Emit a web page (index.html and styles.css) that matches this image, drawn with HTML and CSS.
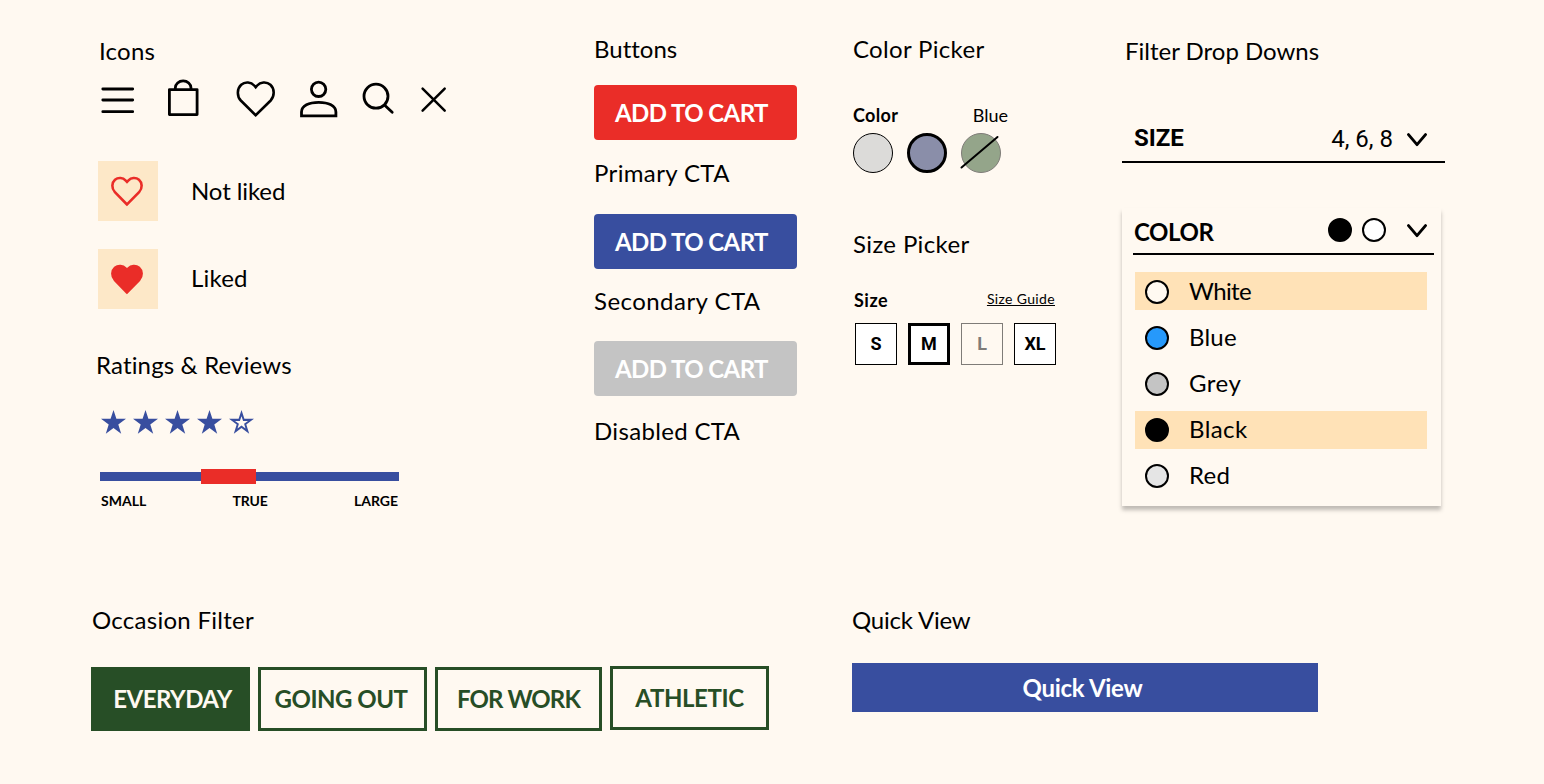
FILE: index.html
```html
<!DOCTYPE html>
<html lang="en">
<head>
<meta charset="utf-8">
<title>UI Components</title>
<link rel="stylesheet" href="styles.css">
</head>
<body>
<main class="board">
  <section class="col col-icons">
    <h2 class="title title-icons"><span class="t t-icons">Icons</span></h2>
    <svg class="icon-row" width="360" height="44" viewBox="0 0 360 44" fill="none" stroke="#000" stroke-width="2.8" stroke-linecap="round">
      <path d="M6.800 13H36.700M6.800 24H36.700M6.800 35.700H36.700"/>
      <path d="M73.4 13.6H101.1V38.6H73.4ZM79.300 13V12A7.7 6.900 0 0 1 95 12V13" stroke-linejoin="round"/>
      <path d="M159.7 39.200L144.8 24.5C140.6 20 141.1 12.5 145.2 8.8C149.2 5.2 155.2 6.2 158.2 9.5L159.7 11.2L161.2 9.5C164.2 6.2 170.4 5.2 174.4 8.8C178.5 12.5 178.9 20 174.7 24.5Z" stroke-width="2.600"/>
      <circle cx="222.6" cy="13.3" r="7.2"/>
      <path d="M205.5 39.800V36C205.5 29.8 213 26.3 222.7 26.3S239.9 29.8 239.9 36V39.800Z" stroke-linecap="butt"/>
      <circle cx="280" cy="20.2" r="12"/>
      <path d="M289 29.5L296.2 36.3"/>
      <path d="M326.6 12.6L348.700 34.6M348.700 12.6L326.6 34.6" stroke-width="2.500"/>
    </svg>
    <div class="like">
      <span class="tile"><svg width="34" height="32" viewBox="0 0 34 32"><path class="heart" d="M17 28.5L4.9 16.1C1.3 12.4 1.7 6.7 5 3.8C8.2 1.1 13 1.7 15.5 4.3L17 5.9L18.500 4.300C21 1.700 25.800 1.100 29 3.800C32.300 6.700 32.700 12.400 29.100 16.100Z"/></svg></span>
      <span class="t t-notliked">Not liked</span>
    </div>
    <div class="like like-on">
      <span class="tile"><svg width="34" height="32" viewBox="0 0 34 32"><path class="heart heart-full" d="M17 28.5L4.9 16.1C1.3 12.4 1.7 6.7 5 3.8C8.2 1.1 13 1.7 15.500 4.300L17 5.900L18.500 4.300C21 1.700 25.800 1.100 29 3.800C32.300 6.700 32.700 12.400 29.100 16.100Z"/></svg></span>
      <span class="t t-liked">Liked</span>
    </div>
    <h2 class="title title-ratings"><span class="t t-ratings">Ratings &amp; Reviews</span></h2>
    <svg class="stars" width="154" height="24" viewBox="0 0 154 24">
      <defs><path id="star" d="M12.5 0L15.400 8.800H25L17.300 14.400L20.200 23.700L12.500 18L4.800 23.700L7.700 14.400L0 8.800H9.600Z"/></defs>
      <use href="#star" x="0"/><use href="#star" x="32"/><use href="#star" x="64"/><use href="#star" x="96"/>
      <path fill-rule="evenodd" d="M140.500 0L143.400 8.800H153L145.300 14.400L148.200 23.700L140.500 18L132.800 23.700L135.700 14.400L128 8.800H137.600ZM140.500 6.200L138.900 10.900H134L137.900 13.700L136.500 18.600L140.500 15.600L144.500 18.600L143.100 13.700L147 10.900H142.100Z"/>
    </svg>
    <div class="fit"><span class="fit-mark"></span></div>
    <div class="fit-labels"><span class="t t-small">SMALL</span><span class="t t-true">TRUE</span><span class="t t-large">LARGE</span></div>
  </section>

  <section class="col col-buttons">
    <h2 class="title"><span class="t t-buttons">Buttons</span></h2>
    <button class="cta cta-primary"><span class="t t-cart">ADD TO CART</span></button>
    <p class="title cap-primary"><span class="t t-primary">Primary CTA</span></p>
    <button class="cta cta-secondary"><span class="t t-cart">ADD TO CART</span></button>
    <p class="title cap-secondary"><span class="t t-secondary">Secondary CTA</span></p>
    <button class="cta cta-disabled"><span class="t t-cart">ADD TO CART</span></button>
    <p class="title cap-disabled"><span class="t t-disabled">Disabled CTA</span></p>
  </section>

  <section class="col col-pickers">
    <h2 class="title"><span class="t t-cpicker">Color Picker</span></h2>
    <div class="color-head"><b class="t t-color">Color</b><span class="t t-cblue">Blue</span></div>
    <div class="swatches">
      <span class="swatch"></span>
      <span class="swatch swatch-selected"></span>
      <span class="swatch swatch-out"><svg width="40" height="40" viewBox="0 0 40 40"><path d="M0.500 34.500L36.500 4" stroke="#000" stroke-width="2" stroke-linecap="round"/></svg></span>
    </div>
    <h2 class="title title-size"><span class="t t-spicker">Size Picker</span></h2>
    <div class="size-head"><b class="t t-size">Size</b><a class="guide t t-guide">Size Guide</a></div>
    <div class="sizes">
      <span class="size">S</span><span class="size size-selected">M</span><span class="size size-out">L</span><span class="size">XL</span>
    </div>
  </section>

  <section class="col col-filters">
    <h2 class="title title-filters"><span class="t">Filter Drop Downs</span></h2>
    <div class="drop">
      <b class="t">SIZE</b>
      <span class="drop-value t">4, 6, 8</span>
      <svg class="chevron" width="20" height="14" viewBox="0 0 20 14"><path d="M1.500 1.600L10 11.600L18.500 1.600"/></svg>
    </div>
    <div class="panel">
      <div class="panel-head">
        <b class="t t-dcolor">COLOR</b>
        <span class="dot dot-black"></span><span class="dot dot-white"></span>
        <svg class="chevron" width="20" height="14" viewBox="0 0 20 14"><path d="M1.500 1.600L10 11.600L18.500 1.600"/></svg>
      </div>
      <ul class="options">
        <li class="option option-on"><span class="dot"></span><span class="t t-white">White</span></li>
        <li class="option"><span class="dot dot-blue"></span><span class="t t-blue">Blue</span></li>
        <li class="option"><span class="dot dot-grey"></span><span class="t t-grey">Grey</span></li>
        <li class="option option-on option-low"><span class="dot dot-black"></span><span class="t t-black">Black</span></li>
        <li class="option"><span class="dot dot-light"></span><span class="t t-red">Red</span></li>
      </ul>
    </div>
  </section>

  <section class="occasion">
    <h2 class="title title-occasion"><span class="t t-occasion">Occasion Filter</span></h2>
    <div class="chips">
      <button class="chip chip-on"><span class="t t-everyday">EVERYDAY</span></button>
      <button class="chip chip-going"><span class="t t-going">GOING OUT</span></button>
      <button class="chip chip-work"><span class="t t-work">FOR WORK</span></button>
      <button class="chip chip-athletic"><span class="t t-athletic">ATHLETIC</span></button>
    </div>
  </section>

  <section class="quick">
    <h2 class="title title-quick"><span class="t t-quick">Quick View</span></h2>
    <button class="quick-button"><span class="t t-quickb">Quick View</span></button>
  </section>
</main>
</body>
</html>
```
FILE: styles.css
```css
* { box-sizing: border-box; }
body { margin: 0; background: #fff9f1; color: #000; font-family: Lato, "Open Sans", sans-serif; font-size: 24px; line-height: 30px; font-variant-ligatures: none; }
h2, p, ul { margin: 0; padding: 0; font-weight: 400; font-size: 24px; list-style: none; }
button { border: 0; padding: 0; font: 700 24px/30px Lato, sans-serif; }
svg { display: block; flex: none; }
.t { white-space: nowrap; }
.title { height: 30px; padding-left: 1px; }

.board {
  display: grid;
  width: 1544px;
  height: 784px;
  grid-template-columns: 503px 258px 270px 331px;
  grid-template-rows: 571px 1fr;
  padding: 34px 0 0 91px;
}
.col { display: flex; flex-direction: column; align-items: flex-start; }

/* Letter spacing per label */
.t-icons { letter-spacing: .25px; }
.t-notliked { letter-spacing: -.1px; }
.t-liked { letter-spacing: .2px; }
.t-ratings { letter-spacing: .15px; }
.t-true { letter-spacing: -.2px; }
.t-cart { letter-spacing: -.58px; }
.t-primary { letter-spacing: .36px; }
.t-secondary { letter-spacing: .45px; }
.t-disabled { letter-spacing: .33px; }
.t-cpicker { letter-spacing: .33px; }
.t-spicker { letter-spacing: .36px; }
.t-color { letter-spacing: .35px; }
.t-size { letter-spacing: .5px; }
.t-guide { letter-spacing: .35px; }
.t-dcolor { letter-spacing: -.4px; }
.t-white { letter-spacing: -.6px; }
.t-blue { letter-spacing: .2px; }
.t-grey { letter-spacing: .5px; }
.t-black { letter-spacing: .4px; }
.t-red { letter-spacing: .3px; }
.t-occasion { letter-spacing: .27px; }
.t-everyday { letter-spacing: -.5px; }
.t-going { letter-spacing: -.5px; }
.t-work { letter-spacing: -.9px; }
.t-athletic { letter-spacing: -.4px; }
.t-quick { letter-spacing: -.2px; }
.t-quickb { letter-spacing: -.3px; }

/* Icons, likes and ratings */
.title-icons { margin-top: 2px; padding-left: 8px; }
.icon-row { margin: 10px 0 0 5px; }
.like { display: flex; align-items: center; gap: 33px; margin: 41px 0 0 7px; height: 60px; }
.like-on { margin-top: 28px; }
.like-on .t { margin-top: -2px; }
.tile { display: flex; width: 60px; height: 60px; padding: 15px 0 0 12px; background: #fde8c8; }
.heart { fill: none; stroke: #ea2d28; stroke-width: 2.6; }
.heart-full { fill: #ea2d28; }
.title-ratings { margin-top: 41px; padding-left: 5px; }
.stars { margin: 30px 0 0 10px; fill: #384e9f; }
.fit { display: flex; align-items: center; width: 299px; height: 9px; margin: 38px 0 0 9px; padding-left: 101px; background: #384e9f; }
.fit-mark { width: 55px; height: 15px; background: #ea2d28; }
.fit-labels { display: flex; justify-content: space-between; width: 297px; margin: 10px 0 0 10px; font-size: 14px; font-weight: 700; line-height: 20px; }

/* Buttons */
.col-buttons .title { padding-left: 0; }
.cta { width: 203px; height: 55px; border-radius: 4px; color: #fff; text-align: left; padding-left: 21px; }
.cta-primary { margin-top: 21px; background: #ea2d28; }
.cta-secondary { margin-top: 26px; background: #384e9f; }
.cta-disabled { margin-top: 25px; background: #c4c4c4; }
.cap-primary { margin-top: 18px; }
.cap-secondary { margin-top: 17px; }
.cap-disabled { margin-top: 20px; }

/* Pickers */
.color-head { display: flex; justify-content: space-between; width: 155px; margin: 39px 0 0 1px; font-size: 18px; line-height: 24px; }
.swatches { display: flex; gap: 14px; margin: 6px 0 0 1px; }
.swatch { width: 40px; height: 40px; border: 1px solid #000; border-radius: 50%; background: #dcdbd9; }
.swatch-selected { border-width: 3px; background: #8a8ea9; }
.swatch-out { border-color: #7f7c78; background: #94a58a; }
.swatch-out svg { margin: -1px; overflow: visible; }
.title-size { margin-top: 56px; }
.size-head { display: flex; justify-content: space-between; width: 201px; margin: 29px 0 0 2px; font-size: 18px; line-height: 24px; }
.guide { font-size: 14px; line-height: 22px; text-decoration: underline; text-underline-offset: 1px; text-decoration-thickness: 1px; }
.sizes { display: flex; gap: 11px; margin: 11px 0 0 3px; }
.size { display: flex; align-items: center; justify-content: center; width: 42px; height: 42px; border: 1px solid #000; background: #fff; font: 700 18px/24px Roboto, sans-serif; }
.size-selected { border-width: 3px; }
.size-out { border-color: #7f7c78; background: none; color: #7f7c78; }

/* Filters */
.title-filters { margin-top: 2px; padding-left: 3px; }
.drop { display: flex; align-items: center; width: 323px; height: 48px; margin-top: 49px; padding: 0 18px 0 12px; border-bottom: 2px solid #000; font-family: Roboto, sans-serif; }
.drop-value { margin: 2px 14px 0 auto; }
.drop .chevron { margin-top: 3px; }
.chevron { fill: none; stroke: #000; stroke-width: 2.900; stroke-linecap: round; stroke-linejoin: round; }
.panel { width: 319px; height: 298px; margin-top: 45px; background: #fff9f1; box-shadow: 0 4px 4px rgba(0, 0, 0, .25); }
.panel-head { display: flex; align-items: center; gap: 10px; width: 301px; height: 47px; margin-left: 11px; padding: 0 7px 0 1px; border-bottom: 2px solid #000; }
.panel-head b { margin: 2px auto 0 0; }
.panel-head .dot { margin-top: -1px; }
.panel-head .chevron { margin-left: 11px; }
.dot { width: 24px; height: 24px; flex: none; border: 2px solid #000; border-radius: 50%; background: #fff9f1; }
.dot-black { background: #000; }
.dot-white { background: #fff; }
.dot-blue { background: #2699fb; }
.dot-grey { background: #c4c4c4; }
.dot-light { background: #e5e5e5; }
.options { display: grid; gap: 8px; margin: 17px 14px 0 13px; }
.option { display: flex; align-items: center; gap: 20px; height: 38px; padding: 2px 0 0 10px; }
.option .t { margin-top: -2px; }
.option-on { background: #ffe2b7; }
.option-low { margin: 1px 0 -1px; padding-top: 0; }

/* Occasion filter */
.occasion { grid-column: 1 / 3; }
.chips { display: flex; gap: 8px; margin-top: 32px; }
.chip { width: 159px; height: 64px; border: 3px solid #274e26; background: none; color: #274e26; }
.chip-on { background: #274e26; color: #fff9f1; padding-left: 4px; }
.chip-going { width: 169px; padding-right: 3px; }
.chip-work { width: 167px; }
.chip-athletic { margin-top: -1px; }

/* Quick view */
.quick { grid-column: 3 / 5; }
.title-quick { padding-left: 0; }
.quick-button { width: 466px; height: 49px; margin-top: 28px; padding-right: 5px; background: #384e9f; color: #fff; }
```
